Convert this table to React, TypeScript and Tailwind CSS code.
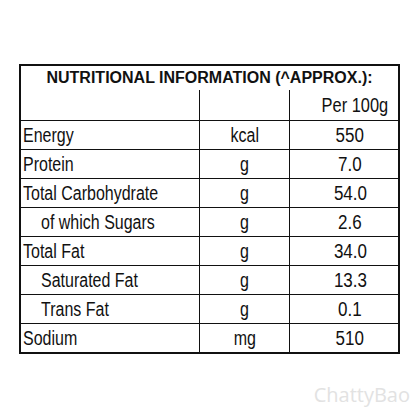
const rows = [
  { label: "Energy", unit: "kcal", value: "550", indent: false },
  { label: "Protein", unit: "g", value: "7.0", indent: false },
  { label: "Total Carbohydrate", unit: "g", value: "54.0", indent: false },
  { label: "of which Sugars", unit: "g", value: "2.6", indent: true },
  { label: "Total Fat", unit: "g", value: "34.0", indent: false },
  { label: "Saturated Fat", unit: "g", value: "13.3", indent: true },
  { label: "Trans Fat", unit: "g", value: "0.1", indent: true },
  { label: "Sodium", unit: "mg", value: "510", indent: false },
];

export default function App() {
  return (
    <div className="relative h-[420px] w-[420px] overflow-hidden bg-white pl-[19px] pt-[64px] text-[#111]">
      <div className="w-[381px] border-2 border-[#111]">
        {/* title */}
        <div className="flex h-[24px] items-center justify-center font-['Liberation_Sans',Arial,sans-serif] text-[16px] font-bold leading-none">
          NUTRITIONAL INFORMATION (^APPROX.):
        </div>

        {/* per 100g */}
        <div className="grid h-[30px] grid-cols-[179px_90px_1fr] font-['Liberation_Sans',Arial,sans-serif] text-[20px] leading-none">
          <div className="border-r border-[#111]" />
          <div className="border-r border-[#111]" />
          <div className="flex items-center justify-end pr-[10px]">
            <span className="inline-block origin-right scale-x-[0.82]">Per 100g</span>
          </div>
        </div>

        {rows.map((row) => (
          <div
            key={row.label}
            className="grid h-[29px] grid-cols-[179px_90px_1fr] border-t border-[#111] font-['Liberation_Sans',Arial,sans-serif] text-[20px] leading-none"
          >
            <div
              className={`flex items-center border-r border-[#111] ${
                row.indent ? "pl-[20px]" : "pl-[2px]"
              }`}
            >
              <span className="inline-block origin-left scale-x-[0.8] whitespace-nowrap">
                {row.label}
              </span>
            </div>
            <div className="flex items-center justify-center border-r border-[#111]">
              <span className="inline-block scale-x-[0.8]">{row.unit}</span>
            </div>
            <div className="flex items-center justify-center pl-[12px]">
              <span className="inline-block scale-x-[0.85]">{row.value}</span>
            </div>
          </div>
        ))}
      </div>

      <div className="absolute right-[10px] top-[385px] font-['Open_Sans',sans-serif] text-[20px] leading-none text-[#e2e2e2]">
        ChattyBao
      </div>
    </div>
  );
}
